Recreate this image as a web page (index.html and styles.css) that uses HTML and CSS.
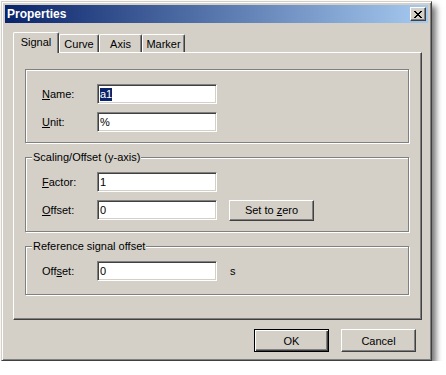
FILE: index.html
```html
<!DOCTYPE html>
<html lang="en">
<head>
  <meta charset="UTF-8" />
  <title>Properties</title>
  <link rel="stylesheet" href="styles.css">
</head>
<body>
  <div class="window">
    <div class="titlebar">
      <span class="title">Properties</span>
      <button class="close-button" aria-label="Close">
        <svg width="8" height="7" viewBox="0 0 8 7" shape-rendering="crispEdges">
          <path d="M0 0h2v1h-2z M6 0h2v1h-2z M1 1h2v1h-2z M5 1h2v1h-2z M2 2h4v1h-4z M3 3h2v1h-2z M2 4h4v1h-4z M1 5h2v1h-2z M5 5h2v1h-2z M0 6h2v1h-2z M6 6h2v1h-2z" fill="#000"/>
        </svg>
      </button>
    </div>

    <div class="client">
      <div class="tabs">
        <div class="tab tab-active tab-signal">Signal</div>
        <div class="tab tab-curve">Curve</div>
        <div class="tab tab-axis">Axis</div>
        <div class="tab tab-marker">Marker</div>
      </div>

      <div class="panel">
        <div class="group group-name">
          <div class="row">
            <label class="label"><u>N</u>ame:</label>
            <div class="field"><span class="selected">a1</span></div>
          </div>
          <div class="row">
            <label class="label"><u>U</u>nit:</label>
            <div class="field">%</div>
          </div>
        </div>

        <div class="group group-scaling">
          <span class="caption">Scaling/Offset (y-axis)</span>
          <div class="row">
            <label class="label"><u>F</u>actor:</label>
            <div class="field">1</div>
          </div>
          <div class="row">
            <label class="label"><u>O</u>ffset:</label>
            <div class="field">0</div>
            <button class="button button-zero">Set to <u>z</u>ero</button>
          </div>
        </div>

        <div class="group group-ref">
          <span class="caption">Reference signal offset</span>
          <div class="row">
            <label class="label">Off<u>s</u>et:</label>
            <div class="field">0</div>
            <span class="unit">s</span>
          </div>
        </div>
      </div>

      <div class="footer">
        <button class="button button-default">OK</button>
        <button class="button">Cancel</button>
      </div>
    </div>
  </div>
</body>
</html>
```

FILE: styles.css
```css
* {
  box-sizing: border-box;
}

body {
  margin: 0;
  background-color: #ffffff;
  font-family: 'Liberation Sans', Arial, sans-serif;
  font-size: 11px;
  color: #000000;
}

.window {
  width: 431px;
  height: 360px;
  margin: 1px 0 0 1px;
  padding: 3px;
  background-color: #d4d0c8;
  border: 1px solid;
  border-color: #d4d0c8 #404040 #404040 #d4d0c8;
  box-shadow: inset 1px 1px #ffffff, inset -1px -1px #808080, 4px 5px 6px rgba(0,0,0,0.55);
  display: flex;
  flex-direction: column;
}

/* title bar */

.titlebar {
  height: 18px;
  background: linear-gradient(to right, #0a246a, #a6caf0);
  display: flex;
  align-items: center;
  justify-content: space-between;
  padding: 0 2px 0 2px;
}

.title {
  color: #ffffff;
  font-weight: bold;
  font-size: 12px;
}

.close-button {
  width: 16px;
  height: 14px;
  padding: 0;
  background-color: #d4d0c8;
  border: 1px solid;
  border-color: #ffffff #404040 #404040 #ffffff;
  box-shadow: inset -1px -1px #808080;
  display: flex;
  align-items: center;
  justify-content: center;
}

/* client area */

.client {
  flex: 1;
  padding: 9px 12px 0 8px;
  display: flex;
  flex-direction: column;
}

.tabs {
  display: flex;
  align-items: flex-end;
  height: 20px;
  position: relative;
  z-index: 1;
}

.tab {
  height: 18px;
  border-top: 1px solid #ffffff;
  border-left: 1px solid #ffffff;
  border-right: 1px solid #404040;
  border-radius: 2px 2px 0 0;
  box-shadow: inset -1px 0 #808080;
  background-color: #d4d0c8;
  display: flex;
  align-items: center;
  justify-content: center;
  padding-top: 1px;
}

.tab-active {
  height: 21px;
  margin-bottom: -1px;
  padding-top: 0;
  padding-bottom: 2px;
}

.tab-signal { width: 46px; }
.tab-curve { width: 40px; }
.tab-axis { width: 43px; }
.tab-marker { width: 43px; }

.panel {
  width: 409px;
  height: 268px;
  border: 1px solid;
  border-color: #ffffff #404040 #404040 #ffffff;
  box-shadow: inset -1px -1px #808080;
  padding: 16px 0 0 11px;
  display: flex;
  flex-direction: column;
  gap: 14px;
}

/* group boxes */

.group {
  position: relative;
  width: 384px;
  border: 1px solid #808080;
  box-shadow: inset 1px 1px #ffffff, 1px 1px #ffffff;
  padding: 14px 0 0 16px;
  display: flex;
  flex-direction: column;
  gap: 8px;
}

.group-name { height: 74px; }
.group-scaling { height: 75px; }
.group-ref { height: 49px; }

.caption {
  position: absolute;
  top: -7px;
  left: 6px;
  padding: 0 1px;
  background-color: #d4d0c8;
  line-height: 13px;
}

.row {
  display: flex;
  align-items: center;
  height: 20px;
}

.label {
  width: 55px;
}

.field {
  width: 120px;
  height: 20px;
  background-color: #ffffff;
  border: 1px solid;
  border-color: #808080 #ffffff #ffffff #808080;
  box-shadow: inset 1px 1px #404040, inset -1px -1px #d4d0c8;
  padding: 0 0 0 2px;
  display: flex;
  align-items: center;
}

.selected {
  background-color: #0a246a;
  color: #ffffff;
  line-height: 13px;
}

.unit {
  margin-left: 13px;
}

/* buttons */

.button {
  width: 75px;
  height: 23px;
  padding: 0;
  font-family: inherit;
  font-size: 11px;
  color: #000000;
  background-color: #d4d0c8;
  border: 1px solid;
  border-color: #ffffff #404040 #404040 #ffffff;
  box-shadow: inset -1px -1px #808080;
}

.button-zero {
  width: 85px;
  height: 21px;
  margin-left: 12px;
}

.button-default {
  border: 1px solid #000000;
  box-shadow: inset 1px 1px #ffffff, inset -1px -1px #404040, inset -2px -2px #808080;
}

.footer {
  display: flex;
  justify-content: flex-end;
  gap: 12px;
  margin-top: 9px;
}
```
